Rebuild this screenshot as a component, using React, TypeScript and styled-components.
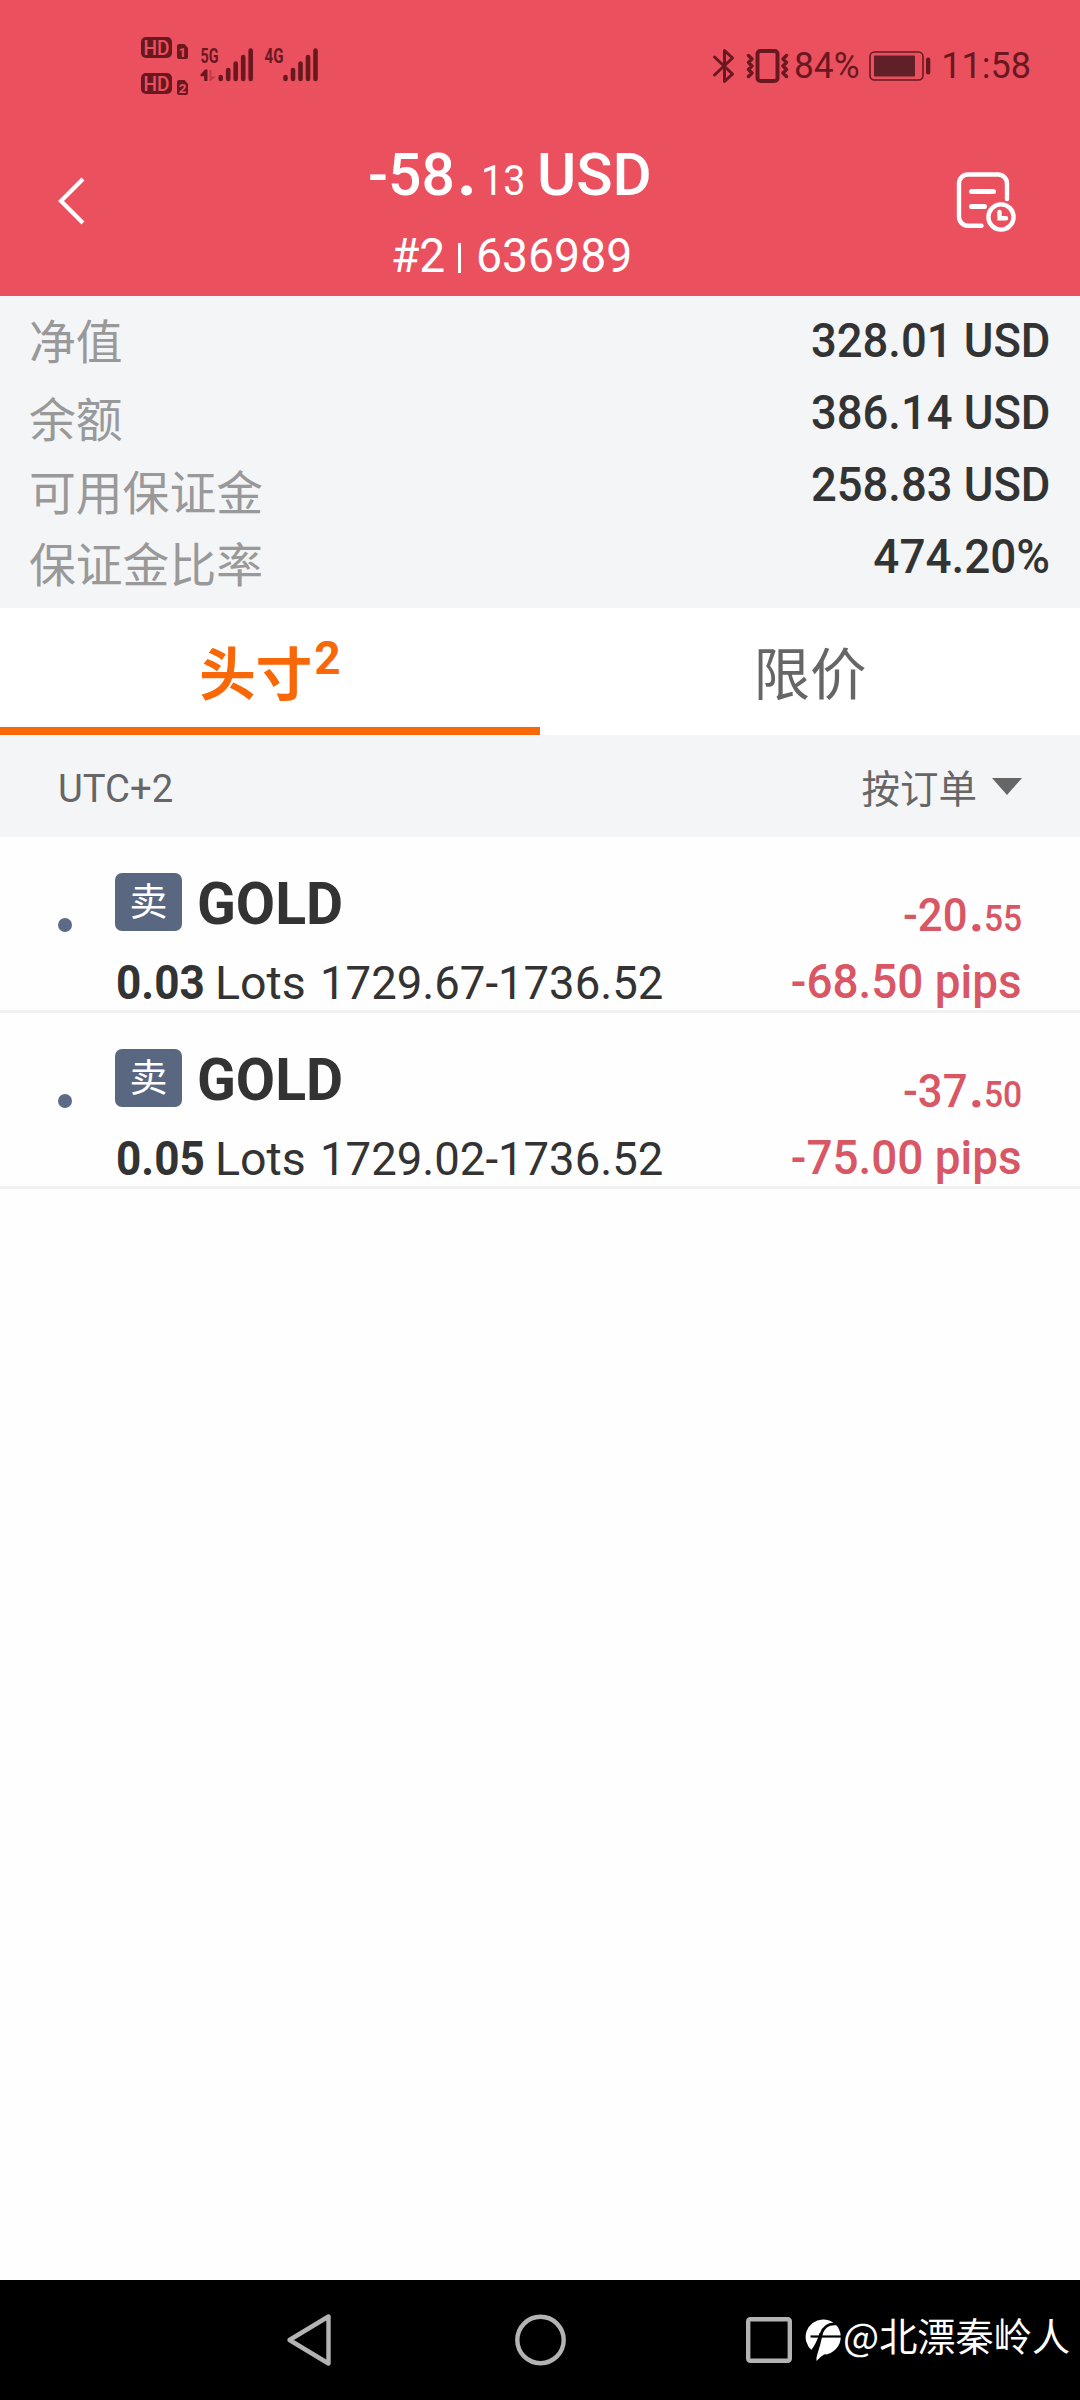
import React from "react";
import styled, { createGlobalStyle } from "styled-components";

const cjk = `"Noto Sans CJK SC", sans-serif`;
const latin = `Roboto, "Noto Sans CJK SC", sans-serif`;

const GlobalStyle = createGlobalStyle`
  * { box-sizing: border-box; }
  body { margin: 0; background: #fff; font-family: ${latin}; }
`;

const Screen = styled.div`
  width: 1080px;
  height: 2400px;
  display: flex;
  flex-direction: column;
  background: #fefefe;
  overflow: hidden;
`;

/* A run of figures set narrower than the family's own width. */
const Figure = styled.span<{
  $size: number;
  $weight?: number;
  $scale?: number;
  $width?: number;
  $end?: boolean;
}>`
  display: inline-block;
  flex: none;
  width: ${(p) => (p.$width ? `${p.$width}px` : "auto")};
  font-size: ${(p) => p.$size}px;
  font-weight: ${(p) => p.$weight ?? 400};
  white-space: pre;
  transform: scaleX(${(p) => p.$scale ?? 1});
  transform-origin: ${(p) => (p.$end ? "right" : "left")} center;
`;

const StatusBar = styled.div`
  height: 120px;
  padding: 30px 50px 0 140px;
  display: flex;
  justify-content: space-between;
  align-items: flex-start;
  background: #eb505f;
  color: #6a1820;
`;

const StatusRight = styled.div`
  display: flex;
  align-items: center;
  height: 72px;
  margin-right: -1px;
`;

const BatteryIcon = styled.svg`
  margin-left: 9px;
  margin-right: 10px;
`;

const Header = styled.header`
  height: 176px;
  display: flex;
  align-items: flex-start;
  background: #eb505f;
  color: #fff;
`;

const HeaderButton = styled.button<{ $side: "left" | "right" }>`
  width: 180px;
  height: 176px;
  padding: ${(p) => (p.$side === "left" ? "56px 0 0 56px" : "50px 0 0 55px")};
  display: flex;
  align-items: flex-start;
  justify-content: flex-start;
  border: 0;
  background: none;
  color: inherit;
`;

const HeaderText = styled.div`
  flex: 1;
  padding-top: 14px;
`;

const Amount = styled.h1`
  margin: 0;
  padding-left: 188px;
  height: 81px;
  line-height: 77px;
  display: flex;
  align-items: baseline;
  font-weight: 500;
`;

const AccountId = styled.div`
  padding-left: 211px;
  height: 81px;
  line-height: 81px;
  display: flex;
  align-items: center;
`;

const Divider = styled.i`
  width: 3px;
  height: 30px;
  margin: 4px 15px 0 0;
  background: #fff;
`;

const Summary = styled.section`
  height: 312px;
  padding: 8px 30px 0 29px;
  display: flex;
  justify-content: space-between;
  background: #f4f5f7;
`;

const Labels = styled.div`
  margin-top: -1px;
  font: 400 46.8px/72px ${cjk};
  color: #999;
`;

const Label = styled.div<{ $after?: number }>`
  margin-bottom: ${(p) => p.$after ?? 0}px;
`;

const Values = styled.div`
  margin-top: 1px;
  display: flex;
  flex-direction: column;
  align-items: flex-end;
  line-height: 72px;
  color: #333;
`;

const Tabs = styled.nav`
  height: 127px;
  display: flex;
  background: #fff;
`;

const Tab = styled.div<{ $active?: boolean }>`
  flex: 1;
  display: flex;
  justify-content: center;
  padding-top: 20px;
  border-bottom: ${(p) => (p.$active ? "8px solid #f96808" : "0")};
  font: ${(p) => (p.$active ? 700 : 400)} 56.5px/84px ${cjk};
  color: ${(p) => (p.$active ? "#f96808" : "#666")};
`;

const Count = styled.sup`
  font: 700 46px/58px ${latin};
  margin-top: 1px;
  padding-left: 2px;
`;

const SortBar = styled.div`
  height: 102px;
  padding: 0 58px 0 58px;
  display: flex;
  align-items: center;
  justify-content: space-between;
  background: #f4f5f7;
  color: #666;
`;

const Zone = styled.div`
  padding-top: 6px;
`;

const Sort = styled.div`
  display: flex;
  align-items: center;
  font: 400 38.5px/60px ${cjk};
  gap: 15px;
`;

const Triangle = styled.i`
  border: 15px solid transparent;
  border-top: 17px solid #666;
  border-bottom: 0;
`;

const Row = styled.article`
  height: 176px;
  display: flex;
  border-bottom: 3px solid #f1f1f2;
  background: #fefefe;
  color: #333;
`;

const Bullet = styled.i`
  width: 14px;
  height: 14px;
  margin: 81px 43px 0 58px;
  border-radius: 50%;
  background: #5c6b87;
`;

const RowMain = styled.div`
  flex: 1;
  display: flex;
  flex-direction: column;
`;

const SymbolLine = styled.div`
  height: 94px;
  padding-top: 36px;
  display: flex;
  align-items: flex-start;
  line-height: 61px;
`;

const Badge = styled.span`
  width: 67px;
  height: 58px;
  margin-right: 15px;
  border-radius: 7px;
  background: #596780;
  color: #fff;
  font: 400 38px/52px ${cjk};
  text-align: center;
`;

const LotsLine = styled.div`
  height: 79px;
  line-height: 104px;
  display: flex;
  align-items: baseline;
  padding-left: 1px;
`;

const RowSide = styled.div`
  width: 300px;
  padding: 42px 58px 0 0;
  display: flex;
  flex-direction: column;
  align-items: flex-end;
  color: #d95764;
`;

const Profit = styled.div`
  display: flex;
  align-items: baseline;
  height: 72px;
  line-height: 69px;
`;

const Pips = styled.div`
  height: 62px;
  line-height: 62px;
`;

const Space = styled.div`
  flex: 1;
`;

const NavBar = styled.footer`
  height: 120px;
  display: flex;
  align-items: center;
  background: #000;
  color: #fff;
  padding-left: 285px;
`;

const NavIcons = styled.div`
  display: flex;
  align-items: center;
  justify-content: space-between;
  width: 509px;
`;

const Author = styled.div`
  display: flex;
  align-items: center;
  margin-left: 11px;
  height: 120px;
  font: 400 38.2px/56px ${cjk};
  white-space: nowrap;
`;

const AuthorName = styled.span`
  margin: -11px 0 0 2px;
`;

const Bars = ({ x }: { x: number }) => (
  <g stroke="#6a1820" strokeWidth="4.6" strokeLinecap="round">
    {[77, 70, 63.5, 57, 50.5].map((top, i) => (
      <line key={top} x1={x + i * 7.5} x2={x + i * 7.5} y1={top - 30} y2={79 - 30 + 0.01} />
    ))}
  </g>
);

const SimIcons = () => (
  <svg width="185" height="72" viewBox="0 0 185 72" fill="#6a1820" fontFamily="Roboto, sans-serif">
    <rect x="1" y="7" width="31" height="21" rx="5" />
    <rect x="1" y="43" width="31" height="21" rx="5" />
    <g fill="#eb505f" fontSize="20" fontWeight="500">
      <text x="3.5" y="25" textLength="26" lengthAdjust="spacingAndGlyphs">HD</text>
      <text x="3.5" y="61" textLength="26" lengthAdjust="spacingAndGlyphs">HD</text>
    </g>
    <path d="M39 14h5.5l3.5 4v9a2 2 0 0 1-2 2h-7a2 2 0 0 1-2-2V16a2 2 0 0 1 2-2z" />
    <path d="M39 50h5.5l3.5 4v9a2 2 0 0 1-2 2h-7a2 2 0 0 1-2-2V52a2 2 0 0 1 2-2z" />
    <g fill="#eb505f" fontSize="13.5" fontWeight="700">
      <text x="38.5" y="26.5">1</text>
      <text x="38.7" y="62.5">2</text>
    </g>
    <g fontSize="21" fontWeight="700">
      <text x="60.5" y="32.5" textLength="18" lengthAdjust="spacingAndGlyphs">5G</text>
      <text x="124.5" y="32.5" textLength="19" lengthAdjust="spacingAndGlyphs">4G</text>
    </g>
    <path d="M67.5 51V39.5h-2.500L60.500 44.500v1.800h3.700V51z" />
    <path d="M69.5 40h2v6.5h4.5L70.5 51h-1z" opacity=".35" />
    <Bars x={80.7} />
    <Bars x={145.5} />
  </svg>
);

const BluetoothVibrate = () => (
  <svg width="84" height="40" viewBox="0 0 84 40" fill="none" stroke="#6a1820" strokeLinecap="round" strokeLinejoin="round">
    <path d="M4.500 11 L22.500 28 L14.500 35.500 V4.500 L22.500 12 L4.500 29" strokeWidth="3" />
    <rect x="47.500" y="5" width="20" height="30" rx="3" strokeWidth="4" />
    <path d="M38.5 9.500l3.500 3.500l-3.500 3.500l3.500 3.500l-3.500 3.500l3.500 3.500l-3.500 3.500M76.500 9.500l-3.500 3.500l3.500 3.500l-3.500 3.500l3.500 3.500l-3.500 3.500l3.500 3.500" strokeWidth="3.4" />
  </svg>
);

const Battery = () => (
  <BatteryIcon width="62" height="30" viewBox="0 0 62 30">
    <rect x="1" y="1" width="53" height="28" rx="4.500" fill="none" stroke="#6a1820" strokeWidth="1.600" />
    <rect x="5" y="4.500" width="41" height="21" rx="1" fill="#611f27" />
    <rect x="57" y="6.500" width="4.300" height="17" rx="2" fill="#6a1820" />
  </BatteryIcon>
);

const BackIcon = () => (
  <svg width="30" height="50" viewBox="0 0 30 50" fill="none" stroke="#fff" strokeWidth="4.200">
    <path d="M27 3 L5 25 L27 47" />
  </svg>
);

const HistoryIcon = () => (
  <svg width="64" height="64" viewBox="0 0 64 64" fill="none" stroke="#fff" strokeWidth="4.400" strokeLinecap="round">
    <path d="M52 29V13.500a9 9 0 0 0-9-9H13a9 9 0 0 0-9 9v33.300a9 9 0 0 0 9 9h13.500" />
    <path d="M16.500 21.500h22M16.500 36.500h13" strokeWidth="5" />
    <circle cx="46" cy="47" r="12.600" />
    <path d="M44.500 42v6.300h6.500" />
  </svg>
);

const BubbleLogo = () => (
  <svg width="36" height="43" viewBox="0 0 36 43">
    <path fill="#fff" d="M17.500 .5A17.500 17.500 0 0 1 19 35.500Q15 38 11.500 42L11.500 34.500L7 31.500A17.500 17.500 0 0 1 17.500 .5z" />
    <path fill="none" stroke="#000" strokeWidth="2.600" d="M31 5Q20 4 16 15" />
    <path fill="none" stroke="#000" strokeWidth="2.200" d="M5.500 17.500H36" />
    <path fill="#000" d="M14.500 14H18Q15.500 26 11.500 38L5 32.500Q11.500 25 14.500 14z" />
  </svg>
);

type Position = { lots: string; prices: string; whole: string; cents: string; pips: string };

const positions: Position[] = [
  { lots: "0.03", prices: "1729.67-1736.52", whole: "-20", cents: "55", pips: "-68.50 pips" },
  { lots: "0.05", prices: "1729.02-1736.52", whole: "-37", cents: "50", pips: "-75.00 pips" },
];

const PositionRow = ({ p }: { p: Position }) => (
  <Row>
    <Bullet />
    <RowMain>
      <SymbolLine>
        <Badge>卖</Badge>
        <Figure $size={60} $weight={700} $scale={0.95}>GOLD</Figure>
      </SymbolLine>
      <LotsLine>
        <Figure $size={48} $weight={700} $scale={0.92} $width={99}>{p.lots}</Figure>
        <Figure $size={47} $scale={0.99} $width={105}>Lots</Figure>
        <Figure $size={47} $scale={0.968}>{p.prices}</Figure>
      </LotsLine>
    </RowMain>
    <RowSide>
      <Profit>
        <Figure $size={45.5} $weight={500} $scale={0.96} $width={66}>{p.whole}</Figure>
        <Figure $size={52} $weight={700} $width={15}>.</Figure>
        <Figure $size={36.5} $weight={500} $scale={0.92} $width={38}>{p.cents}</Figure>
      </Profit>
      <Pips>
        <Figure $size={48} $weight={500} $scale={0.955} $end>{p.pips}</Figure>
      </Pips>
    </RowSide>
  </Row>
);

export default function App() {
  return (
    <Screen>
      <GlobalStyle />
      <StatusBar>
        <SimIcons />
        <StatusRight>
          <BluetoothVibrate />
          <Figure $size={36} $scale={0.98} $width={66}>84%</Figure>
          <Battery />
          <Figure $size={36}>11:58</Figure>
        </StatusRight>
      </StatusBar>
      <Header>
        <HeaderButton $side="left"><BackIcon /></HeaderButton>
        <HeaderText>
          <Amount>
            <Figure $size={60} $weight={500} $scale={0.98} $width={89}>-58</Figure>
            <Figure $size={68} $weight={700} $width={24}>.</Figure>
            <Figure $size={42} $weight={400} $scale={0.94} $width={56}>13</Figure>
            <Figure $size={60} $weight={500} $scale={1}>USD</Figure>
          </Amount>
          <AccountId>
            <Figure $size={48} $scale={0.96} $width={67}>#2</Figure>
            <Divider />
            <Figure $size={48} $scale={0.965}>636989</Figure>
          </AccountId>
        </HeaderText>
        <HeaderButton $side="right"><HistoryIcon /></HeaderButton>
      </Header>
      <Summary>
        <Labels>
          <Label $after={6}>净值</Label>
          <Label $after={1}>余额</Label>
          <Label>可用保证金</Label>
          <Label>保证金比率</Label>
        </Labels>
        <Values>
          <Figure $size={48} $weight={500} $scale={0.945} $end>328.01 USD</Figure>
          <Figure $size={48} $weight={500} $scale={0.945} $end>386.14 USD</Figure>
          <Figure $size={48} $weight={500} $scale={0.945} $end>258.83 USD</Figure>
          <Figure $size={48} $weight={500} $scale={0.955} $end>474.20%</Figure>
        </Values>
      </Summary>
      <Tabs>
        <Tab $active>头寸<Count>2</Count></Tab>
        <Tab>限价</Tab>
      </Tabs>
      <SortBar>
        <Zone>
          <Figure $size={39} $scale={0.98}>UTC+2</Figure>
        </Zone>
        <Sort>按订单<Triangle /></Sort>
      </SortBar>
      {positions.map((p) => <PositionRow key={p.lots} p={p} />)}
      <Space />
      <NavBar>
        <NavIcons>
          <svg width="50" height="56" viewBox="0 0 50 56" fill="none" stroke="#b3b3b3" strokeWidth="4.400" strokeLinejoin="round">
            <path d="M4.500 28L43.500 4.500V51.500z" />
          </svg>
          <svg width="52" height="52" viewBox="0 0 52 52" fill="none" stroke="#b3b3b3" strokeWidth="4.400">
            <circle cx="26.500" cy="26" r="23.200" />
          </svg>
          <svg width="50" height="50" viewBox="0 0 50 50" fill="none" stroke="#b3b3b3" strokeWidth="4.400">
            <rect x="4.200" y="4.200" width="41.600" height="41.600" rx="2" />
          </svg>
        </NavIcons>
        <Author>
          <BubbleLogo />
          <AuthorName>@北漂秦岭人</AuthorName>
        </Author>
      </NavBar>
    </Screen>
  );
}
